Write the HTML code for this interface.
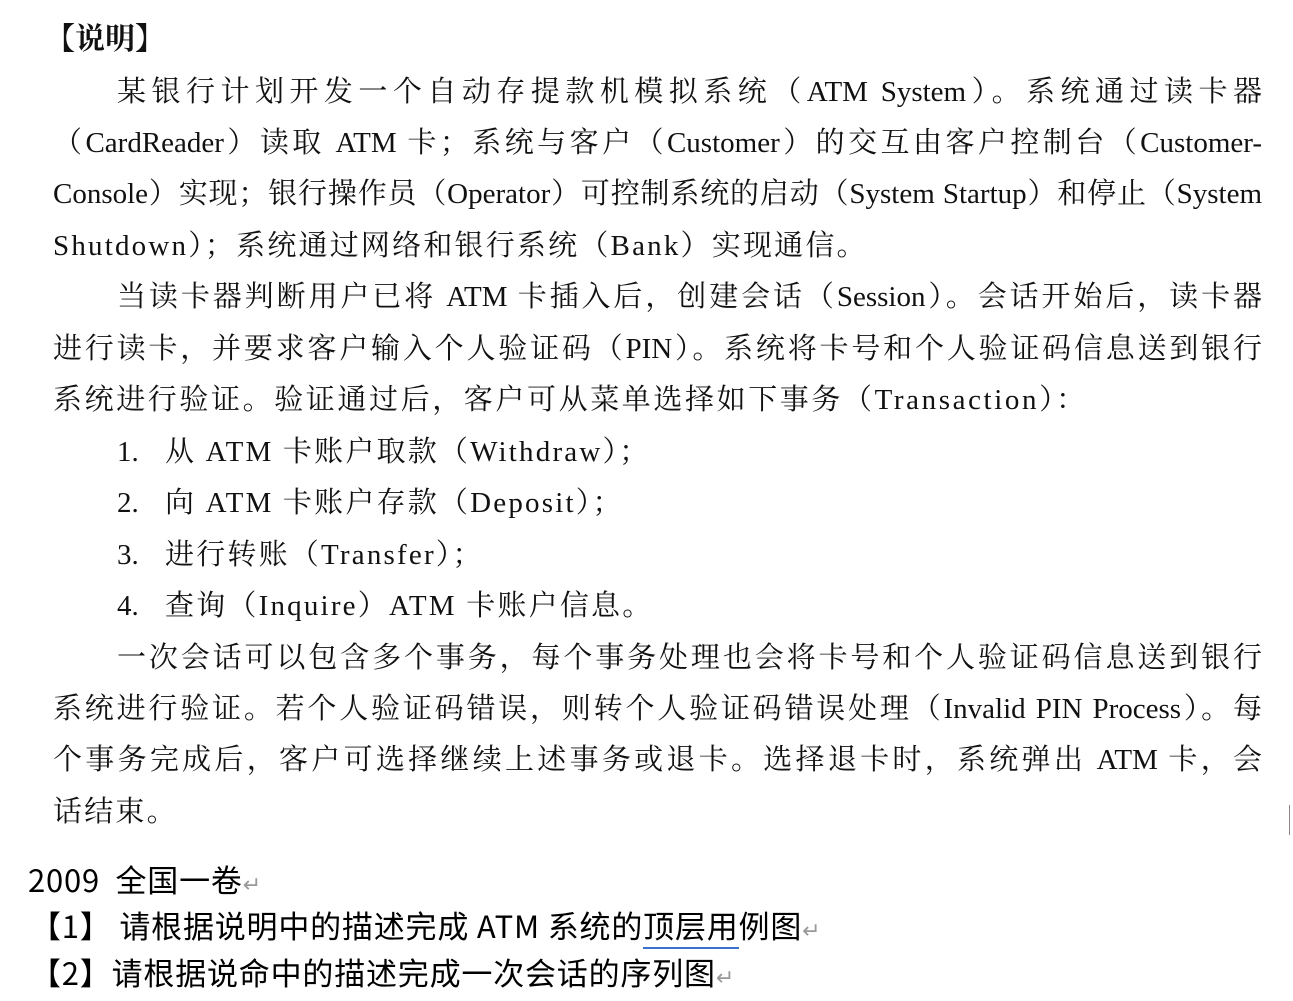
<!DOCTYPE html>
<html><head><meta charset="utf-8"><style>
body{margin:0;background:#fff;width:1293px;height:1001px;overflow:hidden;position:relative}
.l{position:absolute;left:53px;width:1209px;height:40px;line-height:40px;font-family:"Liberation Serif","Noto Serif CJK SC",serif;font-size:29px;color:#111;white-space:nowrap}
.j{text-align:justify;text-align-last:justify}
.ls{letter-spacing:2.2px}
.s{position:absolute;font-family:"Liberation Sans Narrow","WenQuanYi Zen Hei","Noto Sans CJK SC",sans-serif;font-size:31px;color:#000;height:40px;line-height:40px;white-space:nowrap;letter-spacing:0.8px}
.r{color:#999;font-size:22px}
</style></head><body>
<div class="l" style="left:45px;top:20px;font-weight:bold;font-size:30px;">【说明】</div>
<div class="l j" style="top:72px;left:117px;width:1145px">某银行计划开发一个自动存提款机模拟系统（ATM System）。系统通过读卡器</div>
<div class="l j" style="top:123px">（CardReader）读取 ATM 卡；系统与客户（Customer）的交互由客户控制台（Customer-</div>
<div class="l j" style="top:174px">Console）实现；银行操作员（Operator）可控制系统的启动（System Startup）和停止（System</div>
<div class="l ls" style="top:226px">Shutdown）；系统通过网络和银行系统（Bank）实现通信。</div>
<div class="l j" style="top:277px;left:117px;width:1145px">当读卡器判断用户已将 ATM 卡插入后，创建会话（Session）。会话开始后，读卡器</div>
<div class="l j" style="top:329px">进行读卡，并要求客户输入个人验证码（PIN）。系统将卡号和个人验证码信息送到银行</div>
<div class="l" style="top:380px;letter-spacing:2.6px">系统进行验证。验证通过后，客户可从菜单选择如下事务（Transaction）：</div>
<div class="l" style="top:432px;left:117px">1.</div><div class="l ls" style="top:432px;left:165px">从 ATM 卡账户取款（Withdraw）；</div>
<div class="l" style="top:483px;left:117px">2.</div><div class="l ls" style="top:483px;left:165px">向 ATM 卡账户存款（Deposit）；</div>
<div class="l" style="top:535px;left:117px">3.</div><div class="l ls" style="top:535px;left:165px">进行转账（Transfer）；</div>
<div class="l" style="top:586px;left:117px">4.</div><div class="l ls" style="top:586px;left:165px">查询（Inquire）ATM 卡账户信息。</div>
<div class="l j" style="top:638px;left:117px;width:1145px">一次会话可以包含多个事务，每个事务处理也会将卡号和个人验证码信息送到银行</div>
<div class="l j" style="top:689px">系统进行验证。若个人验证码错误，则转个人验证码错误处理（Invalid PIN Process）。每</div>
<div class="l j" style="top:740px">个事务完成后，客户可选择继续上述事务或退卡。选择退卡时，系统弹出 ATM 卡，会</div>
<div class="l ls" style="top:792px">话结束。</div>
<div style="position:absolute;left:1289px;top:805px;width:1px;height:30px;background:#888"></div>
<div class="s" style="left:28px;top:859px">2009&nbsp; 全国一卷<span class="r">↵</span></div>
<div class="s" style="left:30px;top:905px">【1】 请根据说明中的描述完成 ATM 系统的<span style="border-bottom:2px solid #3a6fd0">顶层用</span>例图<span class="r">↵</span></div>
<div class="s" style="left:30px;top:952px">【2】请根据说命中的描述完成一次会话的序列图<span class="r">↵</span></div>
</body></html>
